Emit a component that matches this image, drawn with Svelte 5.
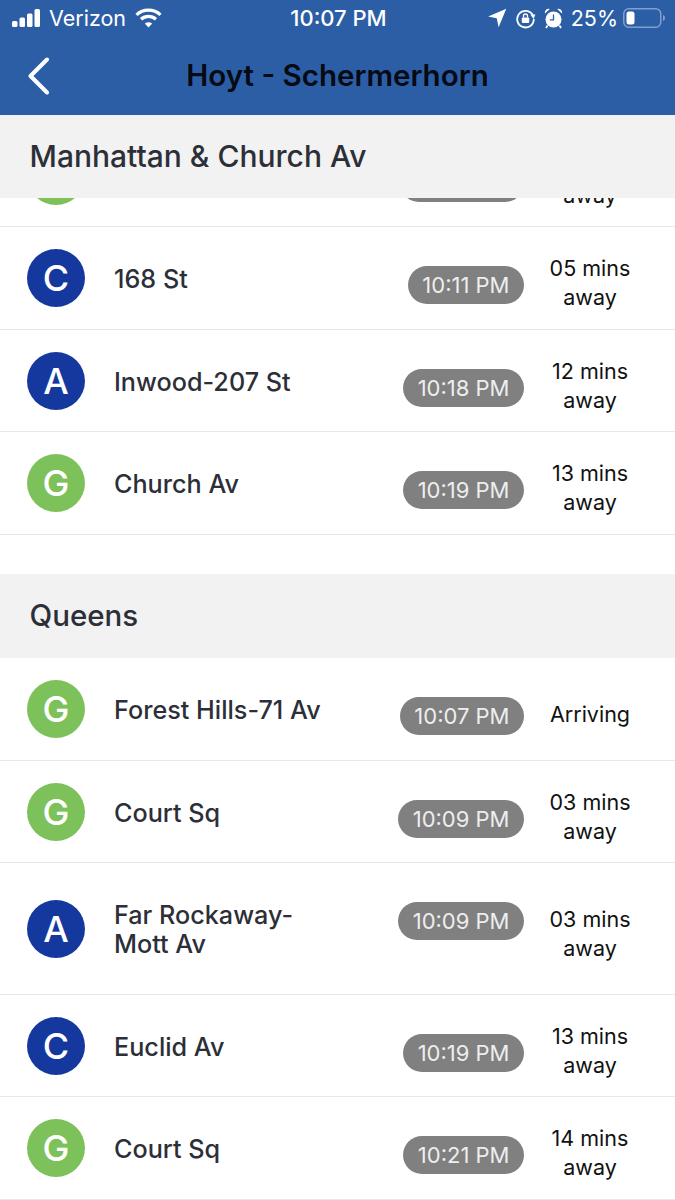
<script>
  const first = [
    { line: 'G', name: ['Church Av'], time: '10:07 PM', eta: ['Arriving', 'away'] },
    { line: 'C', name: ['168 St'], time: '10:11 PM', eta: ['05 mins', 'away'] },
    { line: 'A', name: ['Inwood-207 St'], time: '10:18 PM', eta: ['12 mins', 'away'] },
    { line: 'G', name: ['Church Av'], time: '10:19 PM', eta: ['13 mins', 'away'] }
  ];
  const second = [
    { line: 'G', name: ['Forest Hills-71 Av'], time: '10:07 PM', eta: ['Arriving'] },
    { line: 'G', name: ['Court Sq'], time: '10:09 PM', eta: ['03 mins', 'away'] },
    { line: 'A', name: ['Far Rockaway-', 'Mott Av'], time: '10:09 PM', eta: ['03 mins', 'away'] },
    { line: 'C', name: ['Euclid Av'], time: '10:19 PM', eta: ['13 mins', 'away'] },
    { line: 'G', name: ['Court Sq'], time: '10:21 PM', eta: ['14 mins', 'away'] }
  ];
</script>

{#snippet row(r)}
  <div class="row">
    <div class="badge" class:green={r.line === 'G'}>{r.line}</div>
    <div class="name">
      {#each r.name as n}<div>{n}</div>{/each}
    </div>
    <div class="pill">{r.time}</div>
    <div class="eta">
      {#each r.eta as e}<div>{e}</div>{/each}
    </div>
  </div>
{/snippet}

<div class="page">
  <header>
    <div class="status">
      <div class="left">
        <svg width="30" height="18" viewBox="0 0 30 18" fill="#fff">
          <rect x="0" y="12" width="5.5" height="6" rx="1.5"/>
          <rect x="7.5" y="8.5" width="5.5" height="9.5" rx="1.5"/>
          <rect x="15" y="4.5" width="5.5" height="13.5" rx="1.5"/>
          <rect x="22.5" y="0" width="5.5" height="18" rx="1.5"/>
        </svg>
        <span class="carrier">Verizon</span>
        <svg class="wifi" width="27" height="20" viewBox="0 0 27 20" fill="none" stroke="#fff" stroke-width="3.2">
          <path d="M1.5 6.8C8.2 .6 18.8 .6 25.5 6.8"/>
          <path d="M6 11.3c4.400-3.900 10.600-3.900 15 0"/>
          <path d="M13.500 19.500 9.800 15.500c2.200-1.800 5.200-1.800 7.400 0z" fill="#fff" stroke="none"/>
        </svg>
      </div>
      <div class="clock">10:07 PM</div>
      <div class="right">
        <svg class="arrow" width="17" height="18" viewBox="0 0 17 18" fill="#fff"><path d="M16.500.5 9.500 17.500 7.800 9.300 0 7.700z"/></svg>
        <svg class="lock" width="21" height="21" viewBox="0 0 21 21" fill="none" stroke="#fff" stroke-width="1.800">
          <path d="M17.800 7.200A8.300 8.300 0 1 0 18.800 11"/>
          <path d="M15.300 6.500 20.400 6.500 18.600 11z" fill="#fff" stroke="none"/>
          <rect x="6.800" y="9.500" width="7.400" height="5.600" rx="1" fill="#fff" stroke="none"/>
          <path d="M8.500 9.500V8a2 2 0 0 1 4 0v1.500" stroke-width="1.300"/>
        </svg>
        <svg class="alarm" width="19" height="21" viewBox="0 0 19 21">
          <circle cx="9.500" cy="11.500" r="8" fill="#fff"/>
          <path d="M1 5.500A3.800 3.800 0 0 1 5.800 1zM18 5.500A3.800 3.800 0 0 0 13.200 1z" fill="#fff"/>
          <path d="M3.500 17.500 2 20M15.500 17.500 17 20" stroke="#fff" stroke-width="1.800"/>
          <path d="M9.500 6.500v5.300H5.800" fill="none" stroke="#2c5ea5" stroke-width="1.300"/>
        </svg>
        <span class="pct">25%</span>
        <svg class="battery" width="42" height="20" viewBox="0 0 42 20">
          <rect x=".75" y=".75" width="37" height="18.500" rx="5" fill="none" stroke="#7f9fcc" stroke-width="1.500"/>
          <rect x="3.500" y="3.500" width="8" height="13" rx="2.500" fill="#fff"/>
          <path d="M40 7c1.300.4 2 1.500 2 3s-.7 2.600-2 3z" fill="#7f9fcc"/>
        </svg>
      </div>
    </div>
    <div class="bar">
      <svg class="back" width="24" height="38" viewBox="0 0 24 38" fill="none" stroke="#fff" stroke-width="4" stroke-linecap="round" stroke-linejoin="round">
        <path d="M20 2.500 3.500 19 20 35.500"/>
      </svg>
      <h1>Hoyt - Schermerhorn</h1>
    </div>
  </header>

  <h2>Manhattan &amp; Church Av</h2>
  <div class="scroller">
    <div class="list">
      {#each first as r}
        {@render row(r)}
      {/each}
    </div>
  </div>

  <div class="spacer"></div>

  <h2 class="tall">Queens</h2>
  <div>
    {#each second as r}
      {@render row(r)}
    {/each}
  </div>
</div>

<style>
  :global(body) {
    margin: 0;
    background: #fff;
  }
  .page {
    width: 675px;
    height: 1200px;
    overflow: hidden;
    font-family: Inter, "Liberation Sans", sans-serif;
    background: #fff;
    color: #111;
  }
  header {
    background: #2c5ea5;
    height: 115px;
  }
  .status {
    height: 36px;
    display: grid;
    grid-template-columns: 1fr auto 1fr;
    align-items: center;
    color: #fff;
    padding: 0 10px 0 12px;
  }
  .left, .right {
    display: flex;
    align-items: center;
  }
  .carrier {
    margin-left: 7px;
    font-size: 21.5px;
  }
  .wifi {
    margin-left: 9px;
  }
  .clock {
    font-size: 22px;
    font-weight: 500;
  }
  .right {
    justify-content: flex-end;
  }
  .pct {
    margin-left: 8px;
    font-size: 21.5px;
  }
  .arrow { transform: scale(1.1); margin-right: -1px; }
  .lock { margin-left: 10px; }
  .alarm { margin-left: 8px; }
  .battery { margin-left: 5px; }
  .bar {
    height: 79px;
    display: flex;
    align-items: center;
    justify-content: center;
    position: relative;
  }
  .back {
    position: absolute;
    left: 27px;
    top: 21px;
  }
  h1 {
    margin: 0;
    font-size: 29.5px;
    font-weight: 600;
    color: #050a14;
    padding-bottom: 1px;
  }
  h2 {
    margin: 0;
    height: 83px;
    box-sizing: border-box;
    background: #f2f2f2;
    display: flex;
    align-items: center;
    padding-left: 29.500px;
    padding-bottom: 2px;
    font-size: 30px;
    font-weight: 500;
    color: #2d2f38;
  }
  h2.tall {
    height: 84px;
    font-size: 29.500px;
  }
  .scroller {
    height: 337px;
    overflow: hidden;
  }
  .list {
    margin-top: -73.500px;
  }
  .spacer {
    height: 39px;
  }
  .row {
    display: grid;
    grid-template-columns: 58px 1fr auto 116px;
    align-items: center;
    padding: 0 35px 0 27px;
    border-bottom: 1px solid #e8e8e8;
  }
  .badge {
    width: 58px;
    height: 58px;
    margin-top: 1px;
    border-radius: 50%;
    background: #15389f;
    color: #fff;
    font-size: 36px;
    font-weight: 500;
    display: flex;
    align-items: center;
    justify-content: center;
  }
  .badge.green {
    background: #7dc15b;
  }
  .name {
    margin-left: 29px;
    padding: 38px 0 34.500px;
    font-size: 25.200px;
    font-weight: 500;
    line-height: 29px;
    color: #2d2f38;
  }
  .pill {
    align-self: start;
    margin-top: 39.300px;
    height: 38px;
    line-height: 38px;
    padding: 0 14.500px;
    border-radius: 19px;
    background: #808080;
    color: #eee;
    font-size: 22px;
    font-weight: 400;
  }
  .eta {
    margin-top: 11px;
    margin-left: 16px;
    text-align: center;
    font-size: 21.500px;
    line-height: 29px;
    white-space: nowrap;
  }
</style>
